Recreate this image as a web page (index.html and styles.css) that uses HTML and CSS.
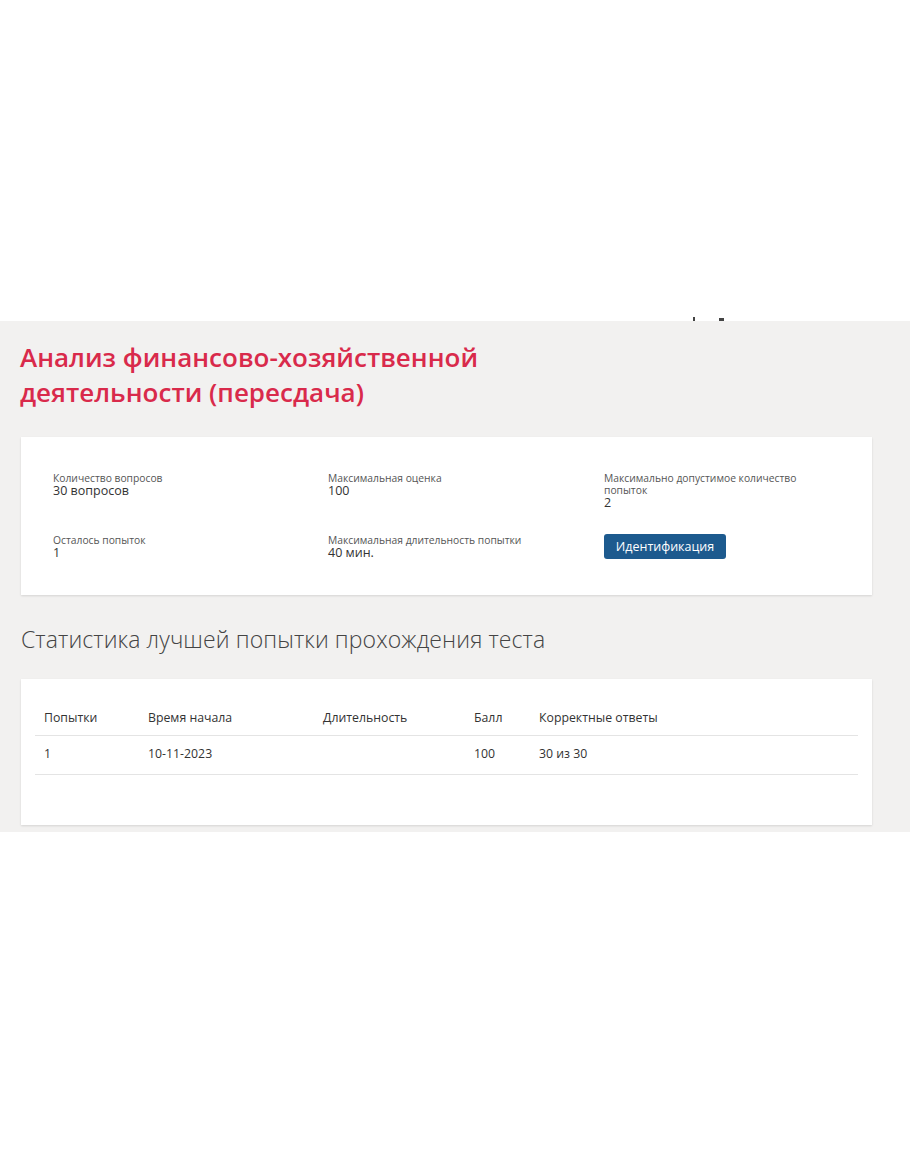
FILE: index.html
```html
<!DOCTYPE html>
<html lang="ru">
<head>
<meta charset="utf-8">
<title>Анализ финансово-хозяйственной деятельности (пересдача)</title>
<link rel="stylesheet" href="styles.css">
</head>
<body>
<div class="top">
  <span class="mark"></span><span class="mark mark-2"></span>
</div>
<main class="page">
  <h1 class="title">Анализ финансово-хозяйственной<br>деятельности (пересдача)</h1>
  <section class="card info">
    <div class="field">
      <div class="label">Количество вопросов</div>
      <div class="value">30 вопросов</div>
    </div>
    <div class="field">
      <div class="label">Максимальная оценка</div>
      <div class="value">100</div>
    </div>
    <div class="field">
      <div class="label">Максимально допустимое количество<br>попыток</div>
      <div class="value">2</div>
    </div>
    <div class="field">
      <div class="label">Осталось попыток</div>
      <div class="value">1</div>
    </div>
    <div class="field">
      <div class="label">Максимальная длительность попытки</div>
      <div class="value">40 мин.</div>
    </div>
    <div class="field">
      <button class="btn" type="button">Идентификация</button>
    </div>
  </section>
  <h2 class="subtitle">Статистика лучшей попытки прохождения теста</h2>
  <section class="card stats">
    <table class="table">
      <thead>
        <tr>
          <th class="c1">Попытки</th>
          <th class="c2">Время начала</th>
          <th class="c3">Длительность</th>
          <th class="c4">Балл</th>
          <th class="c5">Корректные ответы</th>
        </tr>
      </thead>
      <tbody>
        <tr>
          <td>1</td>
          <td>10-11-2023</td>
          <td></td>
          <td>100</td>
          <td>30 из 30</td>
        </tr>
      </tbody>
    </table>
  </section>
</main>
</body>
</html>
```
FILE: styles.css
```css
* { box-sizing: border-box; }
html, body { margin: 0; padding: 0; background: #ffffff; }
body {
  font-family: "Open Sans", "Noto Sans", sans-serif;
  color: #333333;
  width: 910px;
}
.top {
  height: 321px;
  display: flex;
  align-items: flex-end;
  padding-left: 693px;
  gap: 24px;
}
.mark {
  width: 2px;
  height: 4px;
  background: #444;
}
.mark-2 { width: 5px; height: 3px; }
.page {
  background: #f2f1f0;
  height: 511px;
  padding: 19px 38px 0 21px;
}
.title {
  margin: 0 0 0 -1px;
  font-size: 26px;
  line-height: 35px;
  font-weight: 600;
  color: #d92a4b;
}
.card {
  background: #ffffff;
  box-shadow: 0 1px 2px rgba(0,0,0,0.12);
}
.info {
  margin-top: 27px;
  height: 158px;
  padding: 35px 20px 0 32px;
  display: grid;
  grid-template-columns: 275px 276px 1fr;
  grid-template-rows: 40px auto;
  row-gap: 22px;
}
.label {
  font-size: 10.3px;
  line-height: 12px;
  color: #555555;
}
.value {
  font-size: 12.5px;
  line-height: 14px;
  color: #333333;
}
.btn {
  font-family: "Open Sans", "Noto Sans", sans-serif;
  background: #1d5a8e;
  color: #ffffff;
  border: none;
  border-radius: 3px;
  font-size: 12.5px;
  height: 25px;
  width: 122px;
  padding: 0;
  margin-top: -6px;
  cursor: pointer;
}
.subtitle {
  margin: 30px 0 0;
  font-size: 23px;
  line-height: 28px;
  font-weight: 300;
  letter-spacing: 0.1px;
  color: #444444;
}
.stats {
  margin-top: 26px;
  height: 146px;
  padding: 21px 14px 0 14px;
}
.table {
  width: 100%;
  border-collapse: collapse;
  font-size: 12.3px;
  color: #333333;
}
.table th, .table td {
  text-align: left;
  font-weight: 400;
  padding: 8px 9px;
  line-height: 19px;
  border-bottom: 1px solid #e4e4e4;
}
.table td { padding: 8px 9px 11px; }
.c1 { width: 104px; }
.c2 { width: 175px; }
.c3 { width: 151px; }
.c4 { width: 65px; }
```
